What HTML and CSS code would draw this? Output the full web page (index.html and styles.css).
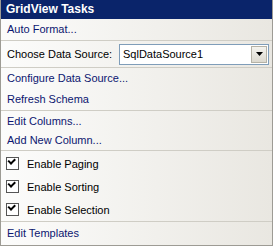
FILE: index.html
```html
<!DOCTYPE html>
<html lang="en">
<head>
    <meta charset="UTF-8">
    <title>GridView Tasks</title>
    <link rel="stylesheet" href="styles.css">
</head>
<body>

<div class="panel">
    <div class="panel-title">GridView Tasks</div>

    <div class="section">
        <a class="task-link" href="#">Auto Format...</a>
    </div>

    <div class="section source-row">
        <label for="dataSource">Choose Data Source:</label>
        <div class="combo">
            <span class="combo-text" id="dataSource">SqlDataSource1</span>
            <span class="combo-btn">
                <svg width="7" height="4" viewBox="0 0 7 4"><path d="M0 0h7L3.5 4z" fill="#000"/></svg>
            </span>
        </div>
    </div>

    <div class="section">
        <a class="task-link" href="#">Configure Data Source...</a>
        <a class="task-link" href="#">Refresh Schema</a>
    </div>

    <div class="section columns">
        <a class="task-link" href="#">Edit Columns...</a>
        <a class="task-link short" href="#">Add New Column...</a>
    </div>

    <div class="section checks">
        <label class="check-row"><span class="check"></span>Enable Paging</label>
        <label class="check-row"><span class="check"></span>Enable Sorting</label>
        <label class="check-row"><span class="check"></span>Enable Selection</label>
    </div>

    <div class="section last">
        <a class="task-link tall" href="#">Edit Templates</a>
    </div>
</div>

</body>
</html>
```

FILE: styles.css
```css
body {
    margin: 0;
    font-family: "Liberation Sans", Arial, sans-serif;
    font-size: 11px;
}

.panel {
    width: 271px;
    height: 245px;
    border: 1px solid #9d9b94;
    border-top: none;
    background: linear-gradient(to right, #fcfcfb, #e9e7e1);
    overflow: hidden;
}

.panel-title {
    height: 19px;
    line-height: 19px;
    padding-left: 5px;
    background-color: #0a246a;
    color: white;
    font-size: 12px;
    font-weight: bold;
}

.section {
    display: flex;
    flex-direction: column;
    border-bottom: 1px solid #cfcdc5;
    padding: 0 6px;
}

.section.last {
    border-bottom: none;
}

.task-link {
    display: block;
    height: 21px;
    line-height: 21px;
    color: #0c1670;
    text-decoration: none;
}

.columns .task-link {
    height: 20px;
    line-height: 20px;
}

.columns .task-link.short {
    height: 19px;
    line-height: 19px;
}

.task-link.tall {
    height: 22px;
    line-height: 22px;
}

.source-row {
    flex-direction: row;
    align-items: center;
    height: 26px;
}

.source-row label {
    flex: 0 0 112px;
    white-space: nowrap;
    color: #000;
}

.combo {
    display: flex;
    flex: 0 0 auto;
    width: 148px;
    height: 19px;
    border: 1px solid #7f9db9;
    background: white;
}

.combo-text {
    flex: 1;
    line-height: 19px;
    padding-left: 3px;
    color: #000;
}

.combo-btn {
    width: 16px;
    margin: 1px;
    display: flex;
    align-items: center;
    justify-content: center;
    background: linear-gradient(#f4f3ee, #dcd9cf);
    border: 1px solid #b5b2a6;
    box-sizing: border-box;
}

.checks {
    padding: 1px 5px 0;
}

.check-row {
    display: flex;
    align-items: center;
    height: 23px;
    color: #000;
}

.check {
    width: 11px;
    height: 11px;
    margin-right: 8px;
    border: 1px solid #555;
    background: white;
    position: relative;
}

.check::after {
    content: "";
    position: absolute;
    left: 2px;
    top: 1px;
    width: 5px;
    height: 3px;
    border-left: 2px solid #000;
    border-bottom: 2px solid #000;
    transform: rotate(-45deg);
    transform-origin: 2px 3px;
}
```
